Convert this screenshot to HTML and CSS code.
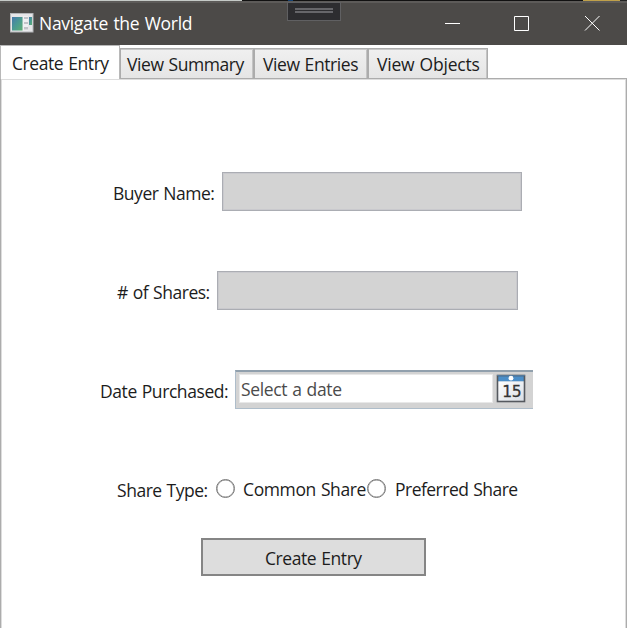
FILE: index.html
```html
<!DOCTYPE html>
<html lang="en">
<head>
<meta charset="utf-8">
<title>Navigate the World</title>
<link rel="stylesheet" href="styles.css">
</head>
<body>
<div class="window">
  <div class="backdrop"><i class="bd-light"></i><i class="bd-dark"></i><i class="bd-blue"></i><i class="bd-dark grow"></i><i class="bd-gold"></i><i class="bd-end"></i></div>
  <header class="titlebar">
    <svg class="app-icon" width="24" height="20" viewBox="0 0 24 20">
      <defs><linearGradient id="g" x1="0" y1="0" x2="1" y2="1"><stop offset="0" stop-color="#4678ac"/><stop offset=".5" stop-color="#4a9a92"/><stop offset="1" stop-color="#5fae72"/></linearGradient></defs>
      <rect x=".5" y=".5" width="22.500" height="18.500" fill="#e6e6e8" stroke="#b4b6b9"/>
      <rect x="2" y="4" width="10.500" height="13.500" fill="url(#g)"/>
      <rect x="13" y="3" width="5" height="14.500" fill="#f0f0f2"/>
      <rect x="14" y="4" width="4" height="2" fill="#c2c3c8"/><rect x="14" y="9" width="4" height="2" fill="#c2c3c8"/><rect x="14" y="14" width="4" height="2.500" fill="#c2c3c8"/>
      <rect x="19" y="4" width="3" height="8" fill="url(#g)"/>
    </svg>
    <span class="title">Navigate the World</span>
    <svg class="caption" width="158" height="17" viewBox="0 0 158 17" fill="none" stroke="#fff">
      <path d="M1 8.500H16M70.500 1.500H84.500V15.500H70.500ZM141 1L155.500 15.500M155.500 1L141 15.500"/>
    </svg>
    <div class="grip"><i></i><i></i></div>
  </header>
  <nav class="tabs">
    <div class="tab active"><span>Create Entry</span></div>
    <div class="tab t2"><span>View Summary</span></div>
    <div class="tab t3"><span>View Entries</span></div>
    <div class="tab t4"><span>View Objects</span></div>
  </nav>
  <main class="panel">
    <div class="row name"><span class="label">Buyer Name:</span><div class="input"></div></div>
    <div class="row shares"><span class="label">#&nbsp;of Shares:</span><div class="input"></div></div>
    <div class="row date"><span class="label">Date Purchased:</span>
      <div class="picker"><div class="datebox"><span>Select a date</span></div>
        <svg width="30" height="29" viewBox="0 0 30 29">
          <defs><linearGradient id="p" x1="0" y1="0" x2="1" y2="1"><stop offset="0" stop-color="#fff"/><stop offset="1" stop-color="#d9dee5"/></linearGradient></defs>
          <rect x="1" y="1" width="28" height="6.500" fill="#4b8ec8"/>
          <rect x="1.500" y="7.500" width="27" height="20" fill="url(#p)"/>
          <rect x="1.500" y="1.500" width="27" height="26" fill="none" stroke="#55595f" stroke-width="1.600"/>
          <path d="M1 1.500H29" stroke="#55799a"/>
          <circle cx="15" cy="4.200" r="2.400" fill="#fff"/>
          <text class="day" x="15.800" y="23" text-anchor="middle">15</text>
        </svg>
      </div>
    </div>
    <div class="row type"><span class="label">Share Type:</span><i class="radio"></i><span class="common">Common Share</span><i class="radio second"></i><span class="preferred">Preferred Share</span></div>
    <div class="submit"><span>Create Entry</span></div>
  </main>
</div>
</body>
</html>
```
FILE: styles.css
```css
* { box-sizing: border-box; }
body { margin: 0; background: #fff; color: #1c1c1c; font: 17.5px/24px "Open Sans", "Noto Sans", sans-serif; letter-spacing: -0.42px; word-spacing: 0.8px; }
.window { width: 627px; height: 628px; display: flex; flex-direction: column; overflow: hidden; }
span { white-space: nowrap; }
.backdrop { height: 1px; display: flex; }
.bd-light { width: 242px; background: #c5cac7; }
.bd-dark { width: 46px; background: #111; }
.bd-blue { width: 5px; background: #123f70; }
.grow { flex: 1; }
.bd-gold { width: 37px; background: #bfa04a; }
.bd-end { width: 7px; background: #222; }
.titlebar { position: relative; height: 44px; background: #4c4a48; border-top: 2px solid #5d5b59; display: flex; align-items: center; padding: 0 25px 0 10px; color: #fff; }
.app-icon { margin-top: -2px; }
.title { margin: -2px 0 0 5px; letter-spacing: -0.3px; word-spacing: 1.2px; }
.caption { margin: -1px 0 0 auto; }
.grip { position: absolute; left: 287px; top: -1px; width: 54px; height: 19px; background: #2d2d30; border: 1px solid #606062; padding: 5px 7px; display: grid; gap: 1px; align-content: start; }
.grip i { height: 2px; background: #66666a; }
.tabs { height: 33px; display: flex; align-items: flex-start; }
.tab { margin-top: 3px; height: 31px; border: 1px solid #acacac; box-shadow: inset 0 1px #c8c8c8, inset -1px 0 #c4c4c4; background: linear-gradient(#f0f0f0, #e5e5e5); padding: 3px 0 0 6px; }
.active { width: 120px; height: 34px; margin-top: 0; padding: 5px 0 0 11px; background: #fff; border-color: #b8b8b8; border-bottom: 0; box-shadow: none; z-index: 1; }
.t2 { width: 134px; }
.t3 { width: 114px; padding-left: 8px; }
.t4 { width: 120px; padding-left: 8px; }
.t4 span { letter-spacing: -0.2px; }
.t3 span { letter-spacing: -0.4px; }
.panel { flex: 1; border: solid #acacac; border-width: 1px 1px 0; padding-top: 93px; box-shadow: inset 0 1px #ddd, inset 1px 0 #ddd, inset -1px 0 #ddd; }
.row { height: 39px; display: flex; align-items: center; margin-bottom: 60px; }
.label { padding-top: 2px; letter-spacing: -0.47px; }
.name { padding-left: 112px; }
.name .label { width: 109px; }
.shares { padding-left: 116px; }
.shares .label { width: 100px; }
.input { width: 300px; height: 39px; background: #d3d3d3; border: 1px solid #abadb3; box-shadow: inset 0 0 0 1px #c9c9cd; }
.shares .input { width: 301px; }
.date { padding-left: 99px; }
.date .label { width: 135px; letter-spacing: -0.42px; }
.picker { width: 298px; height: 39px; background: #d3d3d3; border: 1px solid #aebdca; border-top: 2px solid #91a0ad; border-right: 0; display: flex; padding: 2px 0 0 3px; }
.datebox { width: 254px; height: 29px; border: 1px solid #e8e8e8; background: #fff; color: #4b4b4b; padding: 2px 0 0 1px; margin-right: 3px; letter-spacing: -0.35px; }
.day { font: 500 15.5px "DejaVu Sans", sans-serif; fill: #333; stroke: #333; stroke-width: .3px; letter-spacing: -0.3px; }
.type { padding-left: 116px; margin-bottom: 30px; }
.type .label { width: 98px; }
.radio { width: 19px; height: 19px; border: 1.5px solid #777; border-radius: 50%; background: #fff; margin-left: 1px; box-shadow: inset 0 0 0 .5px #888; }
.common { width: 124px; margin-left: 8px; letter-spacing: -0.38px; }
.second { margin-left: 0; }
.preferred { margin-left: 9px; letter-spacing: -0.52px; }
.submit { width: 225px; height: 38px; margin-left: 200px; border: 2px solid #858585; background: #ddd; padding: 6px 0 0 62px; }
```
